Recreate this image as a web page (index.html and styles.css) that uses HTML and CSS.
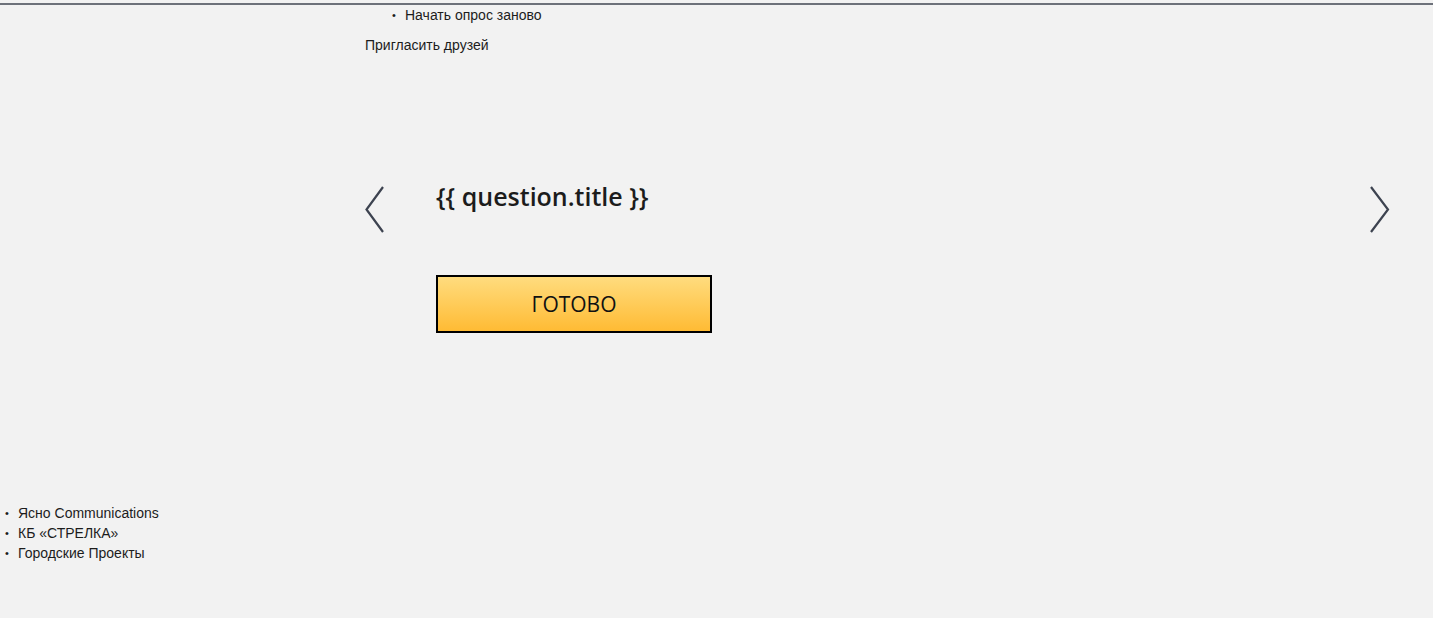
FILE: index.html
```html
<!DOCTYPE html>
<html lang="ru">
<head>
    <meta charset="UTF-8">
    <meta name="viewport" content="width=device-width, initial-scale=1.0">
    <title>Опрос</title>
    <link rel="stylesheet" href="styles.css">
</head>
<body>
    <div class="topline"></div>
    <div class="main">
        <ul class="menu">
            <li>Начать опрос заново</li>
        </ul>
        <a class="invite" href="#">Пригласить друзей</a>

        <div class="slider">
            <button class="arrow prev">
                <svg width="20" height="48" viewBox="0 0 20 48"><path d="M18 1 L1.5 23.5 L18 46" /></svg>
            </button>
            <div class="question">
                <h2 class="question-title">{{ question.title }}</h2>
                <button class="done">ГОТОВО</button>
            </div>
            <button class="arrow next">
                <svg width="20" height="48" viewBox="0 0 20 48"><path d="M1 1 L18 23.5 L1 46" /></svg>
            </button>
        </div>
    </div>

    <ul class="partners">
        <li>Ясно Communications</li>
        <li>КБ «СТРЕЛКА»</li>
        <li>Городские Проекты</li>
    </ul>
</body>
</html>
```

FILE: styles.css
```css
body {
    margin: 0;
    background: #f2f2f2;
    font-family: "Liberation Sans", Arial, sans-serif;
    font-size: 14px;
    color: #1c1c1c;
}
.topline {
    margin-top: 3px;
    height: 2px;
    background: #6d717a;
}
.main {
    margin-left: 365px;
    width: 1025px;
}
ul {
    list-style: none;
}
li::before {
    content: "•";
    display: inline-block;
    vertical-align: top;
    width: 13px;
    margin-left: -13px;
    font-size: 11px;
}
.menu {
    margin: 2px 0 0;
    padding-left: 40px;
    line-height: 16px;
}
.invite {
    display: block;
    margin-top: 14px;
    line-height: 16px;
    color: #1c1c1c;
    text-decoration: none;
}
.slider {
    display: flex;
    margin-top: 128px;
}
.arrow {
    border: none;
    background: transparent;
    padding: 0;
    margin-top: 5px;
    height: 48px;
    cursor: pointer;
}
.arrow svg {
    display: block;
}
.arrow path {
    fill: none;
    stroke: #3d4350;
    stroke-width: 2.2;
}
.prev {
    width: 71px;
    text-align: left;
}
.question {
    flex: 1;
}
.question-title {
    margin: 0;
    font-family: "Open Sans", sans-serif;
    font-size: 25px;
    font-weight: 600;
    line-height: 30px;
    color: #1c1c1c;
}
.done {
    display: block;
    margin-top: 64px;
    width: 276px;
    height: 58px;
    border: 2px solid #000;
    background: linear-gradient(to bottom, #ffdc7e, #ffbb34);
    font-family: "Open Sans", sans-serif;
    font-size: 21px;
    font-weight: 500;
    color: #111;
    cursor: pointer;
}
.partners {
    margin: 170px 0 0;
    padding-left: 18px;
    line-height: 20px;
}
```
